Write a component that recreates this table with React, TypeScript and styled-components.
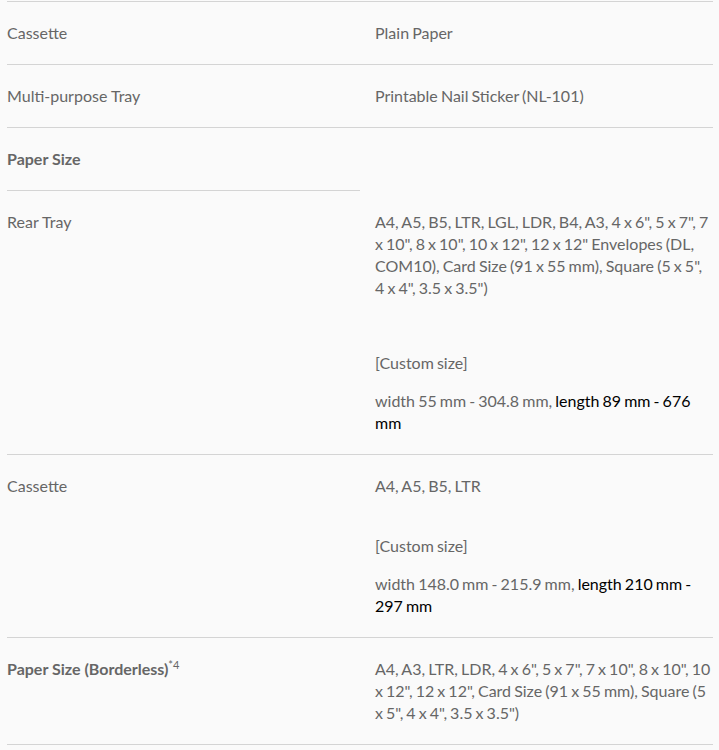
import React from "react";
import styled, { createGlobalStyle } from "styled-components";

const Global = createGlobalStyle`
  html, body { margin: 0; padding: 0; background: #fafafa; }
  body { font-family: Lato, "Open Sans", sans-serif; }
`;

const Table = styled.div`
  display: grid;
  grid-template-columns: 353px 353px;
  width: 706px;
  margin: 1px 0 0 7px;
  border-bottom: 1px solid #d4d4d4;
  color: #666;
  font-size: 16px;
  line-height: 22px;
`;

const Cell = styled.div<{ $border?: boolean; $right?: boolean }>`
  border-top: 1px solid ${(p) => (p.$border ? "#d4d4d4" : "transparent")};
  padding: ${(p) => (p.$right ? "20px 0 20px 15px" : "20px 10px 20px 0")};
  word-spacing: ${(p) => (p.$right ? "-1px" : "0")};
`;

const Head = styled.span`
  font-weight: 700;
`;

const Sup = styled.sup`
  font-size: 11px;
  line-height: 0;
  vertical-align: 6px;
`;

const Para = styled.p<{ $gap?: number }>`
  margin: ${(p) => p.$gap ?? 0}px 0 0;
`;

const Dark = styled.span`
  color: #000;
`;

export default function App() {
  return (
    <>
      <Global />
      <Table>
        <Cell $border>Cassette</Cell>
        <Cell $border $right>Plain Paper</Cell>

        <Cell $border>Multi-purpose Tray</Cell>
        <Cell $border $right>Printable Nail Sticker (NL-101)</Cell>

        <Cell $border><Head>Paper Size</Head></Cell>
        <Cell $border $right />

        <Cell $border>Rear Tray</Cell>
        <Cell $right>
          <Para>
            A4, A5, B5, LTR, LGL, LDR, B4, A3, 4 x 6", 5 x 7", 7 x 10", 8 x 10", 10 x 12", 12 x 12" Envelopes (DL, COM10), Card Size (91 x 55 mm), Square (5 x 5", 4 x 4", 3.5 x 3.5")
          </Para>
          <Para $gap={53}>[Custom size]</Para>
          <Para $gap={16}>
            width 55 mm - 304.8 mm, <Dark>length 89 mm - 676 mm</Dark>
          </Para>
        </Cell>

        <Cell $border>Cassette</Cell>
        <Cell $border $right>
          <Para>A4, A5, B5, LTR</Para>
          <Para $gap={38}>[Custom size]</Para>
          <Para $gap={16}>
            width 148.0 mm - 215.9 mm, <Dark>length 210 mm - 297 mm</Dark>
          </Para>
        </Cell>

        <Cell $border>
          <Head>Paper Size (Borderless)</Head>
          <Sup>*4</Sup>
        </Cell>
        <Cell $border $right>
          A4, A3, LTR, LDR, 4 x 6", 5 x 7", 7 x 10", 8 x 10", 10 x 12", 12 x 12", Card Size (91 x 55 mm), Square (5 x 5", 4 x 4", 3.5 x 3.5")
        </Cell>
      </Table>
    </>
  );
}
